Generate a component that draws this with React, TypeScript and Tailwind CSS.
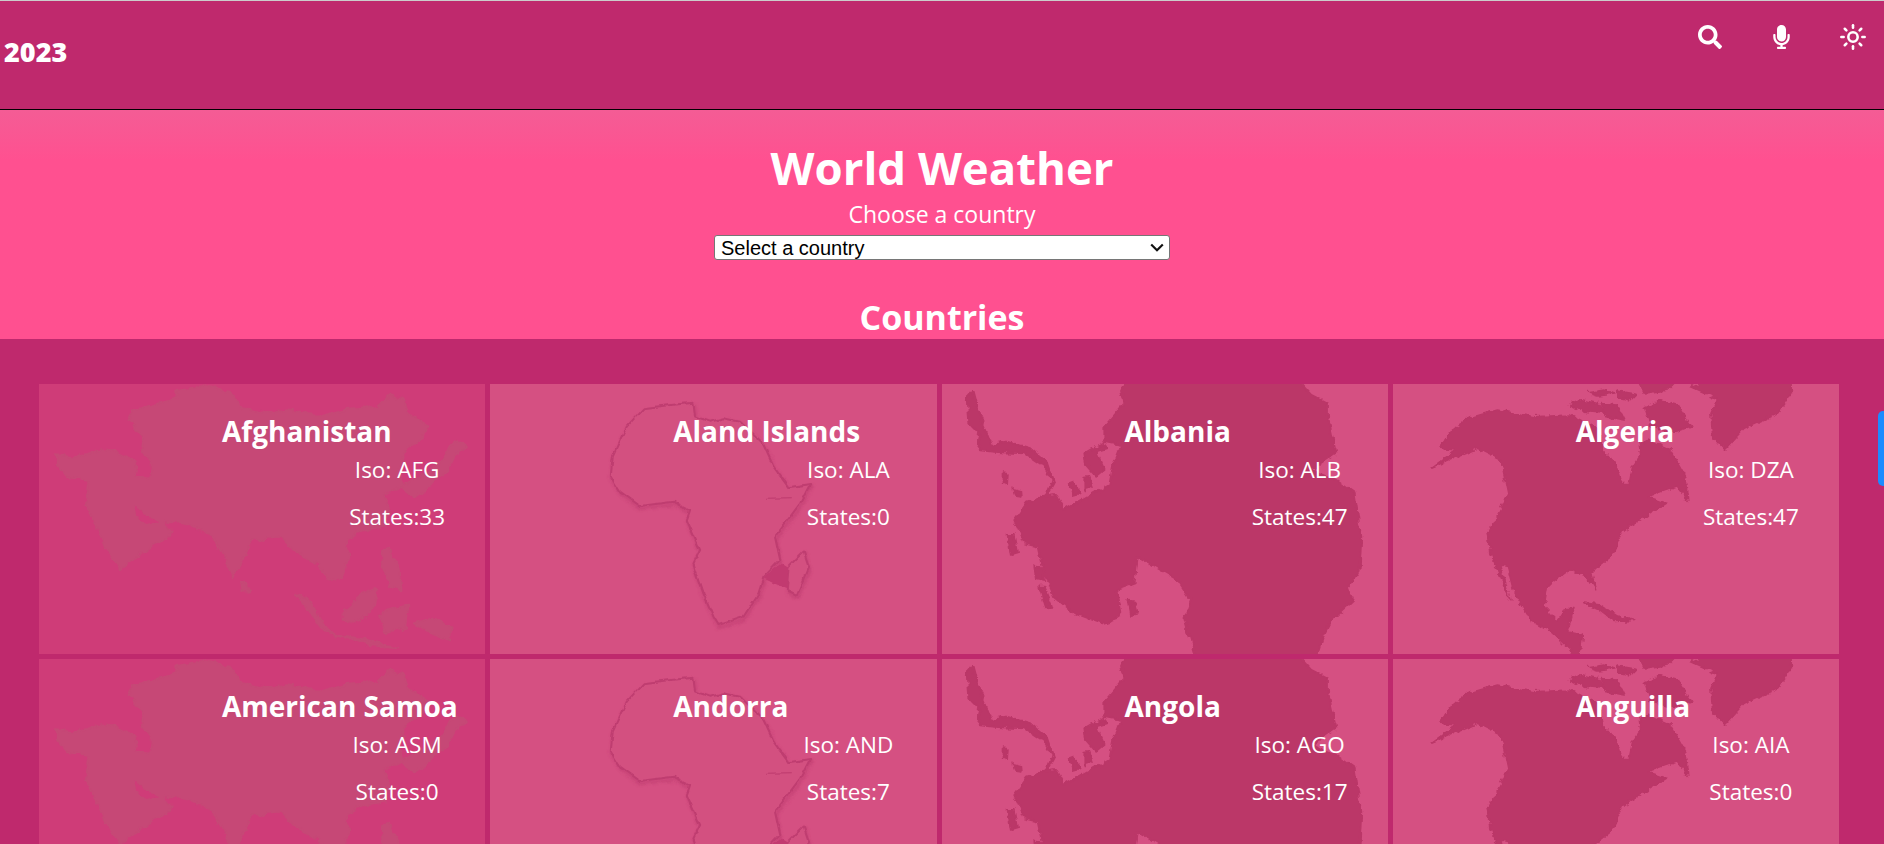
import React from "react";
import { FaSearch, FaMicrophone } from "react-icons/fa";
import { Sun } from "lucide-react";

function Coast({ id, scale, freq }: { id: string; scale: number; freq: number }) {
  return (
    <filter id={id} x="-10%" y="-10%" width="120%" height="120%" colorInterpolationFilters="sRGB">
      <feTurbulence type="fractalNoise" baseFrequency={freq} numOctaves={3} seed={4} result="noise" />
      <feDisplacementMap in="SourceGraphic" in2="noise" scale={scale} xChannelSelector="R" yChannelSelector="G" />
    </filter>
  );
}

function Asia() {
  return (
    <svg className="absolute inset-0 w-full h-full" viewBox="117 42 1338 810" preserveAspectRatio="none">
      <defs>
        <Coast id="coast-asia" scale={24} freq={0.035} />
      </defs>
      <g filter="url(#coast-asia)">
        <g fill="#c64876" stroke="#c64876" strokeWidth="5" strokeLinejoin="round">
          <path d="M170 255L230 262L320 235L395 272L415 290L410 320L450 322L455 280L425 240L430 205L385 150L400 120L530 85L535 62L620 45L690 65L720 110L800 130L860 120L920 130L1000 130L1050 115L1130 110L1170 75L1210 90L1225 130L1285 170L1265 205L1215 240L1200 300L1210 345L1150 375L1170 430L1150 470L1090 480L1040 505L1045 560L1030 620L990 632L960 590L880 540L840 500L760 510L720 580L700 625L670 560L640 500L560 462L490 455L515 480L510 500L440 540L360 598L340 570L300 500L258 400L268 330L200 322L170 285Z" />
          <path d="M1340 240L1375 210L1400 230L1370 250L1345 300L1290 345L1240 385L1200 350L1300 300Z" />
          <path d="M885 670L925 690L980 770L1010 800L960 770Z" />
          <path d="M1030 720L1085 670L1130 655L1120 720L1060 760L1030 750Z" />
          <path d="M990 790L1080 805L1190 835L1100 825Z" />
          <path d="M1145 540L1170 535L1200 610L1205 665L1170 650L1150 590Z" />
          <path d="M1135 735L1170 715L1225 710L1215 770L1160 790Z" />
          <path d="M1240 760L1300 745L1355 770L1350 812L1290 790Z" />
          <path d="M725 635L742 640L745 665L730 665Z" />
        </g>
        <path d="M405 405L430 430L480 455L435 465L410 430Z" fill="#cf3c78" />
      </g>
    </svg>
  );
}

const africaPath =
  "M490 115L570 105L640 98L645 140L690 155L730 145L780 155L815 190L850 225L880 290L925 352L990 342L960 400L900 480L885 500L900 570L850 622L835 670L790 740L715 765L700 740L670 670L640 580L660 540L620 450L630 420L580 395L480 408L420 365L392 320L398 260L440 170Z";
const madagascar = "M970 545L985 590L950 675L920 660L925 590Z";

function Africa() {
  return (
    <svg className="absolute inset-0 w-full h-full" viewBox="30 42 1338 810" preserveAspectRatio="none">
      <defs>
        <filter id="africa-shadow" x="-10%" y="-10%" width="120%" height="120%">
          <feGaussianBlur stdDeviation="5" />
        </filter>
        <Coast id="coast-africa" scale={14} freq={0.03} />
      </defs>
      <g filter="url(#coast-africa)">
        <g transform="translate(3 8)" filter="url(#africa-shadow)" fill="none" stroke="#b8356a" strokeOpacity="0.55" strokeWidth="8">
          <path d={africaPath} />
          <path d={madagascar} />
        </g>
        <path d={africaPath} fill="#d35080" stroke="#bf3d70" strokeWidth="6" strokeLinejoin="round" />
        <path d={madagascar} fill="#d35080" stroke="#bf3d70" strokeWidth="6" strokeLinejoin="round" />
        <path d="M905 578L925 590L920 655L880 640L850 625Z" fill="#c23a70" />
        <path d="M855 385L935 383" stroke="#bd3a6d" strokeWidth="3" fill="none" />
      </g>
    </svg>
  );
}

function Antarctica() {
  return (
    <svg className="absolute inset-0 w-full h-full" viewBox="33 42 1338 810" preserveAspectRatio="none">
      <defs>
        <Coast id="coast-ant" scale={20} freq={0.04} />
      </defs>
      <g fill="#bb3768" stroke="#bb3768" strokeWidth="6" strokeLinejoin="round" filter="url(#coast-ant)">
        <path d="M125 62L140 120L160 170L180 225L230 215L300 235L350 280L370 340L350 375L290 395L250 450L280 520L320 530L335 600L370 680L430 730L510 760L570 740L555 660L610 640L620 560L740 630L780 690L760 745L800 880L1150 880L1175 800L1200 750L1265 690L1250 650L1285 600L1290 500L1270 370L1215 330L1140 300L1215 250L1190 140L1190 100L1140 75L1090 20L590 20L570 60L580 100L520 170L520 215L570 225L545 290L535 345L400 420L375 375L345 380L365 330L340 290L280 250L190 245L140 240L150 200L115 160L110 80Z" />
        <path d="M460 250L490 232L520 300L495 320L465 285Z" />
        <path d="M495 232L520 222L525 235L500 242Z" />
        <path d="M415 340L430 335L445 370L425 375Z" />
        <path d="M460 320L475 318L485 350L460 358Z" />
        <path d="M230 495L248 495L258 550L240 555Z" />
        <path d="M310 590L335 592L340 630L315 625Z" />
        <path d="M325 650L340 650L365 710L345 712Z" />
        <path d="M592 692L610 695L620 730L600 735Z" />
        <path d="M215 310L230 312L228 345L215 340Z" />
        <path d="M250 355L270 360L272 380L255 378Z" />
      </g>
    </svg>
  );
}

function NorthAmerica() {
  return (
    <svg className="absolute inset-0 w-full h-full" viewBox="27 42 1338 810" preserveAspectRatio="none">
      <defs>
        <Coast id="coast-na" scale={20} freq={0.05} />
      </defs>
      <g fill="#bb3768" stroke="#bb3768" strokeWidth="4" strokeLinejoin="round" filter="url(#coast-na)">
        <path d="M140 295L215 240L165 235L205 180L250 145L340 120L450 140L560 135L640 175L655 240L700 290L715 340L735 340L745 290L770 255L765 225L790 210L860 240L905 320L915 395L880 350L790 380L850 400L800 430L720 480L690 550L640 590L620 610L635 660L610 620L560 600L490 650L480 710L520 752L545 715L570 715L550 785L595 795L585 880L560 840L500 785L440 750L390 670L370 590L350 585L378 690L340 600L320 550L312 490L350 420L372 375L350 270L280 235Z" />
        <path d="M920 50L990 20L1220 20L1222 70L1180 130L1080 175L1020 240L985 200L980 130L1000 85Z" />
        <path d="M555 105L590 88L640 100L665 130L600 125Z" />
        <path d="M650 100L700 105L722 150L665 140Z" />
        <path d="M780 110L830 92L880 105L920 170L865 188L800 170Z" />
        <path d="M610 68L660 60L690 72L640 78Z" />
        <path d="M700 60L760 70L740 90L700 82Z" />
        <path d="M760 30L880 30L850 60L780 70Z" />
        <path d="M598 698L650 705L700 738L752 752L690 755L640 718Z" />
      </g>
    </svg>
  );
}

const countries = [
  { name: "Afghanistan", iso: "AFG", states: 33, map: "asia" },
  { name: "Aland Islands", iso: "ALA", states: 0, map: "africa" },
  { name: "Albania", iso: "ALB", states: 47, map: "antarctica" },
  { name: "Algeria", iso: "DZA", states: 47, map: "na" },
  { name: "American Samoa", iso: "ASM", states: 0, map: "asia" },
  { name: "Andorra", iso: "AND", states: 7, map: "africa" },
  { name: "Angola", iso: "AGO", states: 17, map: "antarctica" },
  { name: "Anguilla", iso: "AIA", states: 0, map: "na" },
];

function Card({ name, iso, states, map }: { name: string; iso: string; states: number; map: string }) {
  return (
    <div className={`relative h-[270px] overflow-hidden text-white ${map === "asia" ? "bg-[#cf3c78]" : "bg-[#d55082]"}`}>
      {map === "asia" && <Asia />}
      {map === "africa" && <Africa />}
      {map === "antarctica" && <Antarctica />}
      {map === "na" && <NorthAmerica />}
      <div className="relative pt-[31px]">
        <h3 className="pl-[183px] text-[28px] leading-[32px] font-bold whitespace-nowrap">{name}</h3>
        <p className="pl-[270px] mt-[9px] text-center text-[22.5px] leading-[28px]">Iso: {iso}</p>
        <p className="pl-[270px] mt-[19px] text-center text-[22.5px] leading-[28px]">States:{states}</p>
      </div>
    </div>
  );
}

export default function App() {
  return (
    <div className="relative h-[844px] overflow-hidden bg-[#bf296d] font-['Open_Sans',sans-serif]">
      <header className="flex h-[110px] justify-between border-t border-b border-t-[#cccccc] border-b-black bg-[#bf296d] text-white">
        <div className="pl-[4px] pt-[33px] text-[27px] leading-[36px] font-extrabold">2023</div>
        <div className="flex items-start gap-[51px] pt-[24px] pr-[19px]">
          <FaSearch className="h-[24px] w-[24px]" />
          <FaMicrophone className="h-[24px] w-[17px]" />
          <Sun className="h-[28px] w-[28px] -mx-[2px] -mt-[2px]" strokeWidth={2.2} />
        </div>
      </header>
      <section className="flex h-[229px] flex-col items-center bg-gradient-to-b from-[#f45c95] to-[#ff5090] to-[22%] text-white">
        <h1 className="mt-[25px] text-[45.5px] leading-[64px] font-bold">World Weather</h1>
        <label className="-mt-[1px] text-[23px] leading-[32px]">Choose a country</label>
        <div className="relative mt-[5px] h-[25px] w-[456px]">
          <select className="h-[25px] w-full appearance-none rounded-[3px] border border-[#767676] bg-white pt-[2px] pl-[6px] font-['Liberation_Sans',sans-serif] text-[20px] leading-[21px] text-black">
            <option>Select a country</option>
          </select>
          <svg className="pointer-events-none absolute top-[8px] right-[6px] h-[9px] w-[14px]" viewBox="0 0 14 9" fill="none">
            <path d="M1.2 1.5L7 7.2L12.8 1.5" stroke="#111111" strokeWidth="2.2" />
          </svg>
        </div>
        <h2 className="mt-[36px] text-[34px] leading-[43px] font-bold">Countries</h2>
      </section>
      <section className="grid grid-cols-4 gap-[5px] pt-[45px] pr-[45px] pl-[39px]">
        {countries.map((c) => (
          <Card key={c.name} {...c} />
        ))}
      </section>
      <div className="absolute top-[411px] right-0 h-[75px] w-[6px] rounded-l-[5px] bg-[#1a8cff]" />
    </div>
  );
}
